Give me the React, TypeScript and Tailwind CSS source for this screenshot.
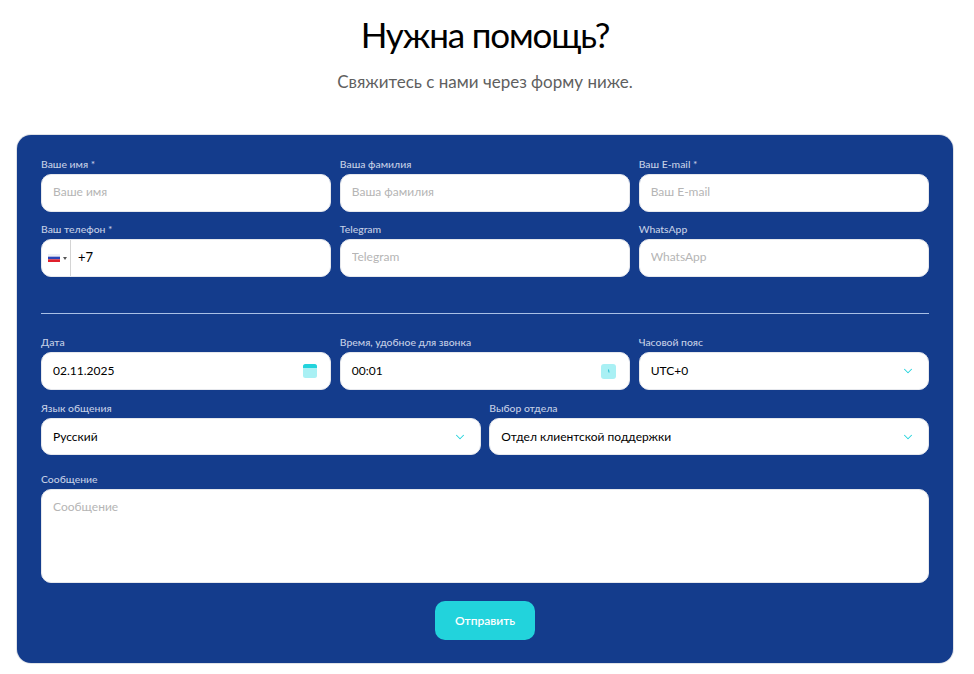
import { ChevronDown } from "lucide-react";

const font = "font-['Lato','Noto_Sans',sans-serif]";

function Label({ children }: { children: React.ReactNode }) {
  return <div className="h-[13px] mb-[4px] pt-[1px] text-[10.4px] leading-[13px] font-medium text-[#c4cfe5]">{children}</div>;
}

function Field({ label, placeholder }: { label: string; placeholder: string }) {
  return (
    <div>
      <Label>{label}</Label>
      <input
        placeholder={placeholder}
        className="block w-full h-[38px] rounded-[10px] border border-[#e6e8ed] bg-white px-[11px] pb-[3px] text-[12px] text-black placeholder:text-[#b5b5b5] outline-none"
      />
    </div>
  );
}

function ValueBox({ children, right, height = "h-[38px]" }: { children: React.ReactNode; right?: React.ReactNode; height?: string }) {
  return (
    <div className={`flex items-center justify-between ${height} rounded-[10px] border border-[#e6e8ed] bg-white px-[11px] text-[12px] text-black`}>
      <span>{children}</span>
      {right}
    </div>
  );
}

function Select({ label, value, height }: { label: string; value: string; height?: string }) {
  return (
    <div>
      <Label>{label}</Label>
      <ValueBox height={height} right={<ChevronDown className="w-[14px] h-[14px] text-[#22d3dc] mr-[2px]" strokeWidth={1.75} />}>
        {value}
      </ValueBox>
    </div>
  );
}

export default function App() {
  return (
    <div className={`${font} min-h-[674px] bg-white pl-[17px] pr-[21px] overflow-hidden`}>
      <h1 className="pt-[12px] text-center text-[35px] leading-[44px] text-black tracking-[-1.15px]">Нужна помощь?</h1>
      <p className="mt-[15px] text-center text-[17px] leading-[22px] text-[#5f5f5f]">Свяжитесь с нами через форму ниже.</p>

      <form className="mt-[42px] h-[528px] rounded-[14px] ring-1 ring-[#dfe2e7] bg-[#143c8c] px-[24px] pt-[22px]">
        <div className="grid grid-cols-3 gap-x-[8.5px] gap-y-[10px]">
          <Field label="Ваше имя *" placeholder="Ваше имя" />
          <Field label="Ваша фамилия" placeholder="Ваша фамилия" />
          <Field label="Ваш E-mail *" placeholder="Ваш E-mail" />
          <div>
            <Label>Ваш телефон *</Label>
            <div className="flex items-center h-[38px] rounded-[10px] border border-[#e6e8ed] bg-white text-[13px] text-black">
              <div className="flex items-center gap-[3px] w-[29px] h-full pl-[6px] border-r border-[#d4d4d4] shrink-0">
                <svg width="12" height="8" viewBox="0 0 12 8">
                  <rect width="12" height="2.67" fill="#eef0f6" />
                  <rect y="2.67" width="12" height="2.67" fill="#2b45b8" />
                  <rect y="5.33" width="12" height="2.67" fill="#e0202c" />
                </svg>
                <svg width="4" height="3" viewBox="0 0 4 3">
                  <path d="M0 0h4L2 3z" fill="#555" />
                </svg>
              </div>
              <span className="pl-[7px]">+7</span>
            </div>
          </div>
          <Field label="Telegram" placeholder="Telegram" />
          <Field label="WhatsApp" placeholder="WhatsApp" />
        </div>

        <hr className="mt-[36px] mb-[21px] border-0 border-t border-[#a9c0e6]" />

        <div className="grid grid-cols-3 gap-x-[8.5px]">
          <div>
            <Label>Дата</Label>
            <ValueBox
              right={
                <svg width="14" height="14" viewBox="0 0 14 14" className="mr-[2px]">
                  <rect width="14" height="14" rx="2.5" fill="#a9f0f4" />
                  <path d="M0 4V2.5A2.5 2.5 0 0 1 2.5 0h9A2.5 2.5 0 0 1 14 2.5V4z" fill="#22d3dc" />
                </svg>
              }
            >
              02.11.2025
            </ValueBox>
          </div>
          <div>
            <Label>Время, удобное для звонка</Label>
            <ValueBox
              right={
                <svg width="15" height="15" viewBox="0 0 15 15" className="mr-[2px]">
                  <rect width="15" height="15" rx="3" fill="#a9f0f4" />
                  <path d="M7.5 5.5 8 8.5" stroke="#22bcd0" strokeWidth="1" />
                </svg>
              }
            >
              00:01
            </ValueBox>
          </div>
          <Select label="Часовой пояс" value="UTC+0" />
        </div>

        <div className="mt-[11px] grid grid-cols-2 gap-x-[8.5px]">
          <Select label="Язык общения" value="Русский" height="h-[37px]" />
          <Select label="Выбор отдела" value="Отдел клиентской поддержки" height="h-[37px]" />
        </div>

        <div className="mt-[17px]">
          <Label>Сообщение</Label>
          <textarea
            placeholder="Сообщение"
            className="block w-full h-[94px] resize-none rounded-[10px] border border-[#e6e8ed] bg-white px-[11px] py-[9px] text-[12px] leading-[16px] text-black placeholder:text-[#b5b5b5] outline-none"
          />
        </div>

        <div className="mt-[18px] flex justify-center">
          <button type="button" className="w-[100px] h-[39px] rounded-[10px] bg-[#22d3dc] text-[12px] font-semibold text-white">
            Отправить
          </button>
        </div>
      </form>
    </div>
  );
}
